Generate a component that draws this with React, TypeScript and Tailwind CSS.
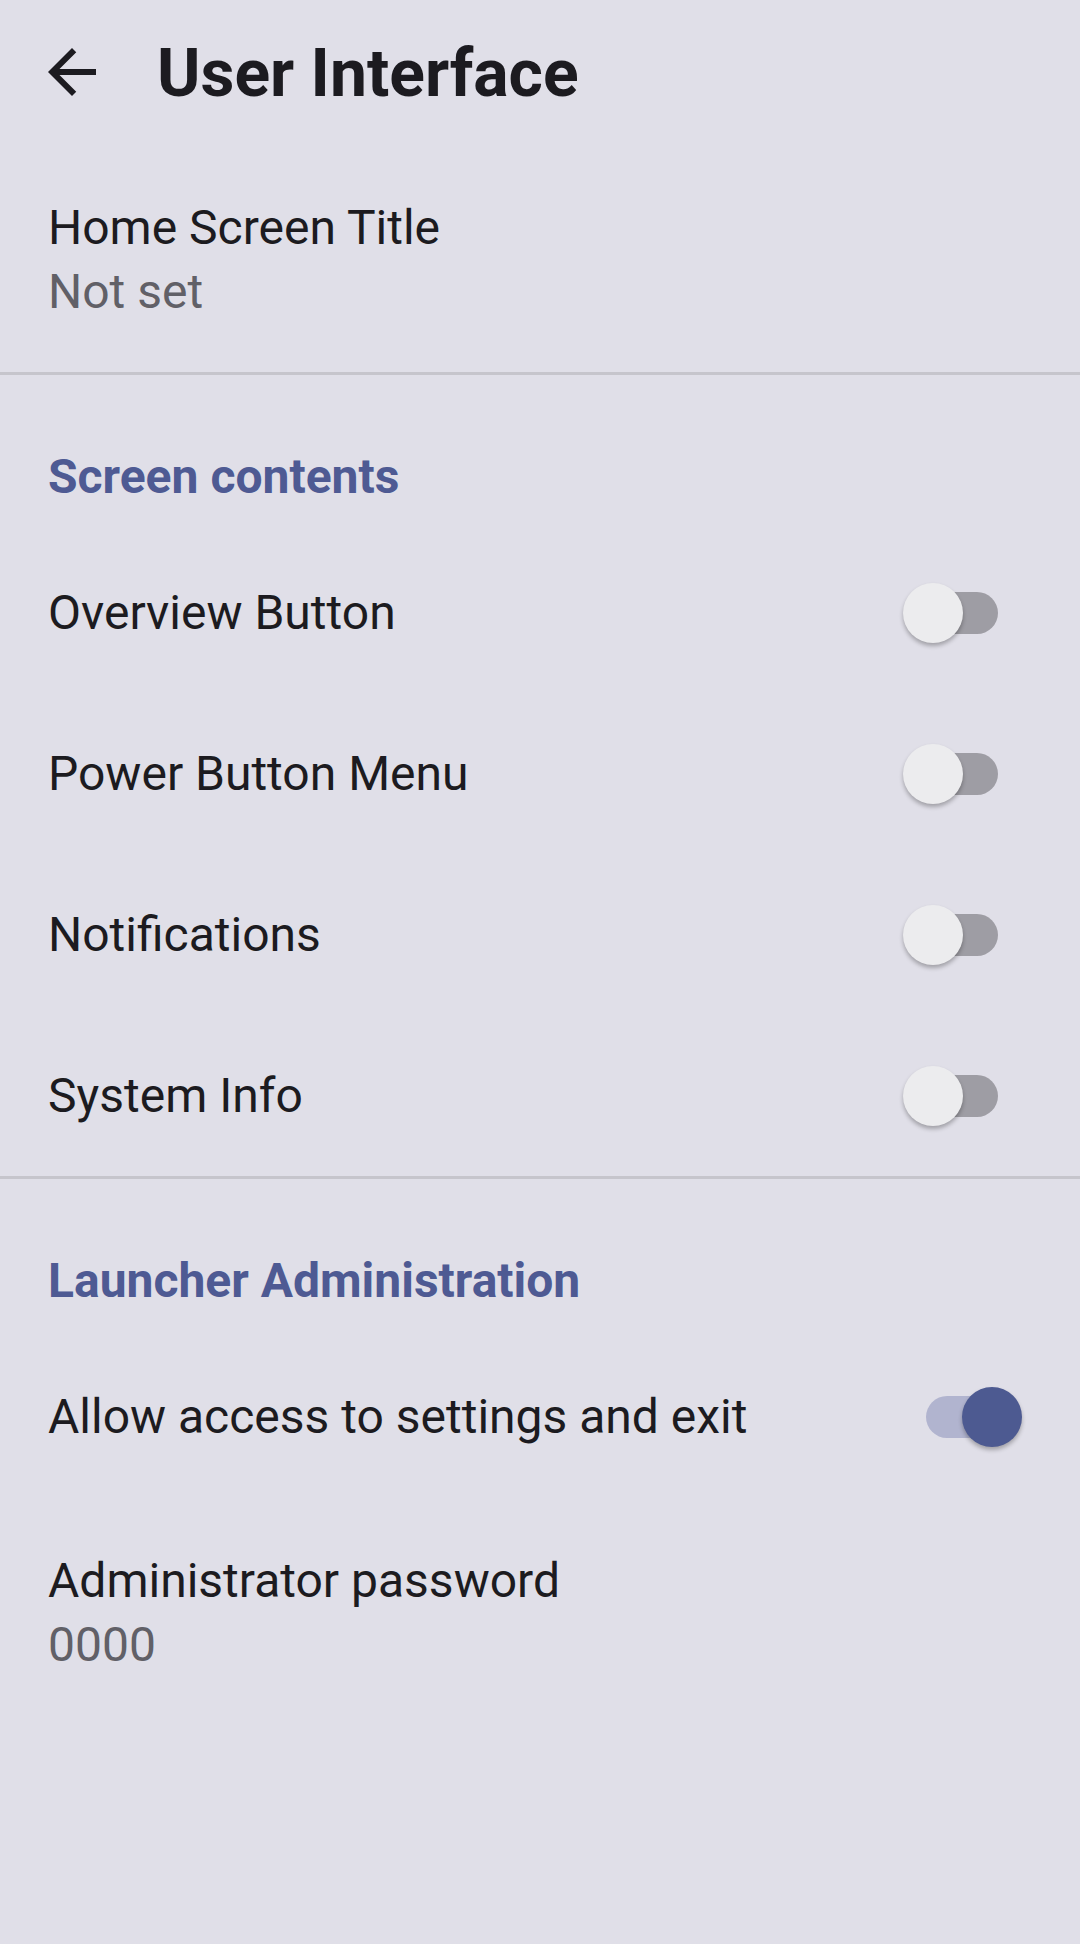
import React from 'react';

const font = { fontFamily: 'Roboto, "Noto Sans", sans-serif' };

const BackArrow = () => (
  <svg viewBox="0 0 24 24" className="w-[72px] h-[72px] fill-[#1c1b20]">
    <path d="M20 11H7.83l5.59-5.59L12 4l-8 8 8 8 1.41-1.41L7.83 13H20v-2z" />
  </svg>
);

const Switch = ({ on }: { on: boolean }) =>
  on ? (
    <div className="relative w-[100px] h-[60px] mr-[56px] shrink-0">
      <div className="absolute left-[2px] right-[6px] top-[9px] h-[42px] rounded-full bg-[#b1b4cf]" />
      <div className="absolute right-[2px] top-0 w-[60px] h-[60px] rounded-full bg-[#4d5a91] shadow-[0_3px_4px_rgba(0,0,0,0.28)]" />
    </div>
  ) : (
    <div className="relative w-[100px] h-[60px] mr-[80px] shrink-0">
      <div className="absolute left-[6px] right-[2px] top-[9px] h-[42px] rounded-full bg-[#9e9da4]" />
      <div className="absolute left-[3px] top-0 w-[60px] h-[60px] rounded-full bg-[#ececee] shadow-[0_3px_4px_rgba(0,0,0,0.28)]" />
    </div>
  );

const SectionHeader = ({ title }: { title: string }) => (
  <div className="pl-[48px] pt-[70px] pb-[23px]">
    <h2 className="text-[48px] leading-[64px] font-bold text-[#4e5a93]">{title}</h2>
  </div>
);

const SwitchRow = ({ label, on = false }: { label: string; on?: boolean }) => (
  <div className="h-[161px] flex items-center justify-between pl-[48px]">
    <span className="text-[48px] leading-[64px] text-[#1c1b20]">{label}</span>
    <Switch on={on} />
  </div>
);

const Divider = () => <div className="h-[3px] bg-[#c6c5cc]" />;

export default function App() {
  return (
    <div className="w-[1080px] h-[1944px] bg-[#e0dfe8] overflow-hidden" style={font}>
      <header className="h-[148px] flex items-center">
        <div className="ml-[36px] -mt-[4px]">
          <BackArrow />
        </div>
        <h1 className="ml-[49px] text-[66px] leading-[80px] font-bold text-[#1c1b20]">User Interface</h1>
      </header>

      <div className="pl-[48px] py-[48px]">
        <div className="text-[48px] leading-[64px] text-[#1c1b20]">Home Screen Title</div>
        <div className="text-[48px] leading-[64px] text-[#616067]">Not set</div>
      </div>

      <Divider />

      <SectionHeader title="Screen contents" />
      <SwitchRow label="Overview Button" />
      <SwitchRow label="Power Button Menu" />
      <SwitchRow label="Notifications" />
      <SwitchRow label="System Info" />

      <Divider />

      <SectionHeader title="Launcher Administration" />
      <SwitchRow label="Allow access to settings and exit" on />

      <div className="pl-[48px] pt-[52px]">
        <div className="text-[48px] leading-[64px] text-[#1c1b20]">Administrator password</div>
        <div className="text-[48px] leading-[64px] text-[#616067]">0000</div>
      </div>
    </div>
  );
}
